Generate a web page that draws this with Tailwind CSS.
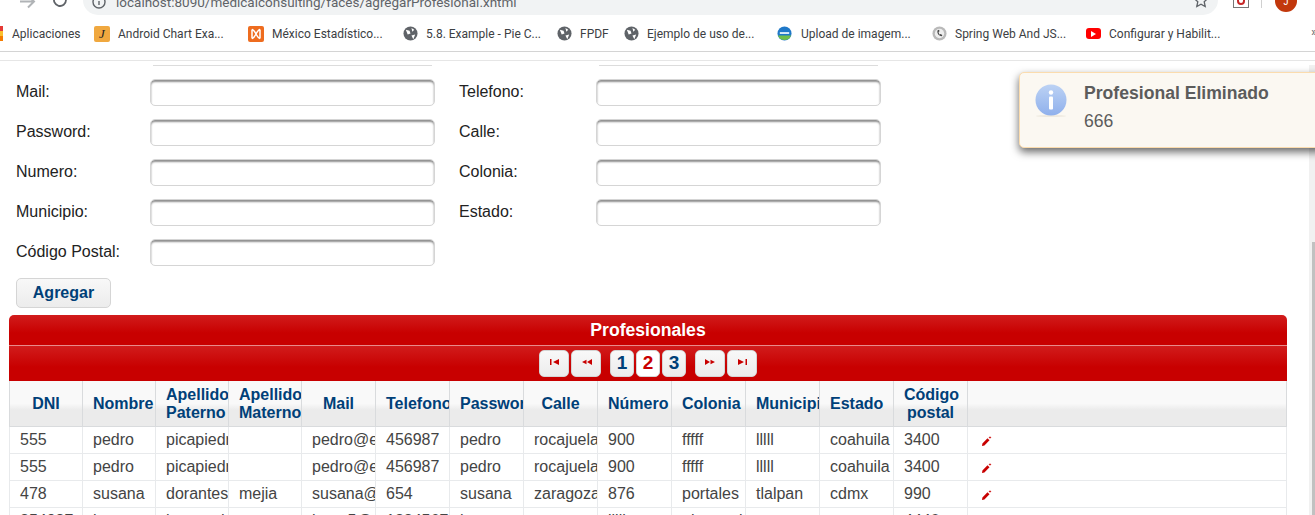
<!DOCTYPE html>
<html>
<head>
    <title>Agregar Profesional</title>
    <script src="https://cdn.jsdelivr.net/npm/@tailwindcss/browser@4"></script>
</head>
<body class="bg-white h-[515px] overflow-hidden relative font-['Liberation_Sans',Arial,sans-serif]">

    <!-- Browser toolbar, cropped at the top -->
    <div class="h-[15px] overflow-hidden flex items-end relative">
        <svg class="absolute left-[19px] bottom-[5px] w-[17px] h-[17px]" viewBox="0 0 17 17" fill="none" stroke="#b0b3b6" stroke-width="2"><path d="M1 8.500h14M9 2.500l6 6-6 6"/></svg>
        <svg class="absolute left-[52px] bottom-[7px] w-[16px] h-[16px]" viewBox="0 0 16 16" fill="none" stroke="#5f6368" stroke-width="1.8"><path d="M14 8a6 6 0 1 1-2-4.500"/></svg>
        <div class="ml-[83px] w-[1135px] h-[30px] bg-[#f1f3f4] rounded-b-[15px] flex items-end pb-[5px] shrink-0 relative">
            <svg class="ml-[9px] mb-[1px] w-[14px] h-[14px] shrink-0" viewBox="0 0 14 14" fill="none" stroke="#5f6368" stroke-width="1.400"><circle cx="7" cy="7" r="6"/><path d="M7 6v4"/></svg>
            <span class="ml-[10px] text-[13.5px] leading-[16px] text-[#5f6368] font-['Roboto',sans-serif] whitespace-nowrap">localhost:8090/medicalconsulting/faces/agregarProfesional.xhtml</span>
            <svg class="absolute right-[9px] bottom-[7px] w-[16px] h-[16px]" viewBox="0 0 16 16" fill="none" stroke="#5f6368" stroke-width="1.300"><path d="M8 1.500l2 4.500 4.800.5-3.600 3.200 1 4.800L8 12.200 3.800 14.500l1-4.800L1.200 6.500 6 6z"/></svg>
        </div>
        <div class="ml-[15px] w-[16px] h-[20px] border border-[#777] bg-white flex justify-center items-end pb-[2px] shrink-0 mb-[7px]">
            <div class="w-[8px] h-[10px] border-2 border-[#c62828] rounded-b-[4px]"></div>
        </div>
        <div class="ml-[12px] w-px h-[14px] bg-[#d0d0d0] mb-[7px] shrink-0"></div>
        <div class="ml-[13px] w-[22px] h-[22px] rounded-full bg-[#c2380c] text-white text-[10px] flex items-center justify-center shrink-0 mb-[3px]">J</div>
    </div>

    <!-- Bookmarks bar -->
    <div class="h-[37px] pt-[1px] border-b border-[#d4d4d4] flex items-center text-[12px] text-[#3c4043] font-['Roboto',sans-serif] whitespace-nowrap relative">
        <div class="absolute left-0 top-[11px] w-[3px] h-[15px] bg-[linear-gradient(#e53935_0_33%,#fbc02d_33%_66%,#f57c00_66%)]"></div>
        <span class="ml-[12px] w-[82px] shrink-0">Aplicaciones</span>
        <div class="w-[154px] flex items-center gap-[8px] shrink-0">
            <div class="w-[16px] h-[16px] rounded-[2px] bg-[#f0a83f] text-[#222] text-[13px] italic font-['Liberation_Serif',serif] flex items-center justify-center">J</div>
            <span>Android Chart Exa...</span>
        </div>
        <div class="w-[155px] flex items-center gap-[8px] shrink-0">
            <div class="w-[16px] h-[16px] rounded-[2px] bg-[#ee6c1f] flex items-center justify-center">
                <svg class="w-[12px] h-[12px]" viewBox="0 0 12 12" fill="none" stroke="#fff" stroke-width="1.500"><path d="M2 1.500c3 0 5 9 8 9M10 1.500c-3 0-5 9-8 9M2 1.500v9M10 1.500v9"/></svg>
            </div>
            <span>México Estadístico...</span>
        </div>
        <div class="w-[154px] flex items-center gap-[8px] shrink-0">
            <svg class="w-[15px] h-[15px]" viewBox="0 0 16 16"><circle cx="8" cy="8" r="7.500" fill="#5f6368"/><path d="M3 4l4 1 1 3-3 1zM9 2l3 2-2 2zM9 10l4-1-2 5z" fill="#fff"/></svg>
            <span>5.8. Example - Pie C...</span>
        </div>
        <div class="w-[67px] flex items-center gap-[8px] shrink-0">
            <svg class="w-[15px] h-[15px]" viewBox="0 0 16 16"><circle cx="8" cy="8" r="7.500" fill="#5f6368"/><path d="M3 4l4 1 1 3-3 1zM9 2l3 2-2 2zM9 10l4-1-2 5z" fill="#fff"/></svg>
            <span>FPDF</span>
        </div>
        <div class="w-[153px] flex items-center gap-[8px] shrink-0">
            <svg class="w-[15px] h-[15px]" viewBox="0 0 16 16"><circle cx="8" cy="8" r="7.500" fill="#5f6368"/><path d="M3 4l4 1 1 3-3 1zM9 2l3 2-2 2zM9 10l4-1-2 5z" fill="#fff"/></svg>
            <span>Ejemplo de uso de...</span>
        </div>
        <div class="w-[155px] flex items-center gap-[9px] shrink-0">
            <svg class="w-[15px] h-[15px]" viewBox="0 0 16 16"><circle cx="8" cy="8" r="7.500" fill="#1f78c8"/><path d="M1 10a7.500 7.500 0 0 0 14 0z" fill="#6fbf4a"/><rect x="3" y="6.500" width="10" height="2" fill="#dfeffa"/></svg>
            <span>Upload de imagem...</span>
        </div>
        <div class="w-[154px] flex items-center gap-[8px] shrink-0">
            <svg class="w-[15px] h-[15px]" viewBox="0 0 16 16"><circle cx="8" cy="8" r="7.500" fill="#b9b9b9"/><circle cx="8" cy="8" r="5" fill="#eee"/><path d="M6 4.500c-1 3 1 6 4.500 6.500l.5-1.500-2-1-.8.8C7.500 8 7 7 7 6.300l1-.6L7.500 4z" fill="#444"/></svg>
            <span>Spring Web And JS...</span>
        </div>
        <div class="flex items-center gap-[8px] shrink-0">
            <div class="w-[15px] h-[11px] rounded-[3px] bg-[#f00] flex items-center justify-center">
                <div class="w-0 h-0 border-y-[3px] border-y-transparent border-l-[5px] border-l-white"></div>
            </div>
            <span>Configurar y Habilit...</span>
        </div>
        <span class="absolute left-[1311px] top-[9px] text-[#5f6368] text-[13px] leading-[16px]">»</span>
    </div>

    <!-- Page viewport -->
    <div class="h-[8px] bg-white border-b border-[#e6e6e6] box-content"></div>
    <div class="relative h-[454px] overflow-hidden text-[16px] text-[#222]">
        <div class="absolute right-0 top-[4px] bottom-0 w-[6px] bg-[#f1f1f1]"></div>
        <div class="absolute right-0 top-[181px] bottom-0 w-[3px] bg-[#c1c1c1]"></div>

        <!-- Form -->
        <div class="pt-[12px]">
            <!-- Bottom edges of the row that is scrolled away -->
            <div class="h-0 relative">
                <div class="absolute left-[153px] -top-[8px] w-[279px] h-px bg-[#dcdcdc]"></div>
                <div class="absolute left-[599px] -top-[8px] w-[279px] h-px bg-[#dcdcdc]"></div>
            </div>
            <div class="h-[40px] pt-[6px] flex">
                <label class="ml-[16px] w-[134px] leading-[26px]">Mail:</label>
                <input type="text" class="w-[285px] h-[27px] border border-[#d5d5d5] rounded-[5px] bg-white shadow-[inset_0_2px_2px_#8f8f8f]">
                <label class="ml-[24px] w-[137px] leading-[26px]">Telefono:</label>
                <input type="text" class="w-[285px] h-[27px] border border-[#d5d5d5] rounded-[5px] bg-white shadow-[inset_0_2px_2px_#8f8f8f]">
            </div>
            <div class="h-[40px] pt-[6px] flex">
                <label class="ml-[16px] w-[134px] leading-[26px]">Password:</label>
                <input type="text" class="w-[285px] h-[27px] border border-[#d5d5d5] rounded-[5px] bg-white shadow-[inset_0_2px_2px_#8f8f8f]">
                <label class="ml-[24px] w-[137px] leading-[26px]">Calle:</label>
                <input type="text" class="w-[285px] h-[27px] border border-[#d5d5d5] rounded-[5px] bg-white shadow-[inset_0_2px_2px_#8f8f8f]">
            </div>
            <div class="h-[40px] pt-[6px] flex">
                <label class="ml-[16px] w-[134px] leading-[26px]">Numero:</label>
                <input type="text" class="w-[285px] h-[27px] border border-[#d5d5d5] rounded-[5px] bg-white shadow-[inset_0_2px_2px_#8f8f8f]">
                <label class="ml-[24px] w-[137px] leading-[26px]">Colonia:</label>
                <input type="text" class="w-[285px] h-[27px] border border-[#d5d5d5] rounded-[5px] bg-white shadow-[inset_0_2px_2px_#8f8f8f]">
            </div>
            <div class="h-[40px] pt-[6px] flex">
                <label class="ml-[16px] w-[134px] leading-[26px]">Municipio:</label>
                <input type="text" class="w-[285px] h-[27px] border border-[#d5d5d5] rounded-[5px] bg-white shadow-[inset_0_2px_2px_#8f8f8f]">
                <label class="ml-[24px] w-[137px] leading-[26px]">Estado:</label>
                <input type="text" class="w-[285px] h-[27px] border border-[#d5d5d5] rounded-[5px] bg-white shadow-[inset_0_2px_2px_#8f8f8f]">
            </div>
            <div class="h-[40px] pt-[6px] flex">
                <label class="ml-[16px] w-[134px] leading-[26px]">Código Postal:</label>
                <input type="text" class="w-[285px] h-[27px] border border-[#d5d5d5] rounded-[5px] bg-white shadow-[inset_0_2px_2px_#8f8f8f]">
            </div>
        </div>

        <button class="block mt-[5px] ml-[16px] w-[95px] h-[30px] border border-[#d5d5d5] rounded-[5px] bg-[linear-gradient(#f8f8f8,#ececec)] font-bold text-[#004078]">Agregar</button>

        <!-- Professionals table -->
        <div class="mt-[7px] ml-[9px] w-[1278px]">
            <div class="h-[31px] rounded-t-[5px] border-b border-[#e88b8b] bg-[linear-gradient(#d11c1c,#c80000_60%)] text-white font-bold text-[17.6px] leading-[30px] text-center">Profesionales</div>
            <div class="h-[35px] bg-[linear-gradient(#d11c1c,#c80000_60%)] flex items-start pt-[4px] pl-[530px] text-[#c80000]">
                <button class="w-[30px] h-[27px] mr-[2px] pb-[4px] rounded-[5px] border border-[#d5d5d5] bg-[linear-gradient(#f8f8f8,#ececec)] flex items-center justify-center">
                    <svg class="w-[9px] h-[6px]" viewBox="0 0 9 6" fill="currentColor"><path d="M0 0h1.500v6H0zM9 0v6L3 3z"/></svg>
                </button>
                <button class="w-[30px] h-[27px] pb-[4px] rounded-[5px] border border-[#d5d5d5] bg-[linear-gradient(#f8f8f8,#ececec)] flex items-center justify-center">
                    <svg class="w-[11px] h-[6px]" viewBox="0 0 11 6" fill="currentColor"><path d="M11 0v6L6 3zM5.500 .7v4.600L1 3z"/></svg>
                </button>
                <button class="ml-[9px] w-[24px] h-[27px] mr-[2px] pb-[3px] rounded-[5px] border border-[#d5d5d5] bg-[linear-gradient(#f8f8f8,#ececec)] font-bold text-[19px] leading-none text-[#004078]">1</button>
                <button class="w-[24px] h-[27px] mr-[2px] pb-[3px] rounded-[5px] border border-[#d5d5d5] bg-white font-bold text-[19px] leading-none text-[#c80000]">2</button>
                <button class="w-[24px] h-[27px] pb-[3px] rounded-[5px] border border-[#d5d5d5] bg-[linear-gradient(#f8f8f8,#ececec)] font-bold text-[19px] leading-none text-[#004078]">3</button>
                <button class="ml-[9px] w-[30px] h-[27px] mr-[2px] pb-[4px] rounded-[5px] border border-[#d5d5d5] bg-[linear-gradient(#f8f8f8,#ececec)] flex items-center justify-center">
                    <svg class="w-[11px] h-[6px]" viewBox="0 0 11 6" fill="currentColor"><path d="M0 0v6l5-3zM5.500 .7v4.600L10 3z"/></svg>
                </button>
                <button class="w-[30px] h-[27px] pb-[4px] rounded-[5px] border border-[#d5d5d5] bg-[linear-gradient(#f8f8f8,#ececec)] flex items-center justify-center">
                    <svg class="w-[9px] h-[6px]" viewBox="0 0 9 6" fill="currentColor"><path d="M0 0v6l6-3zM7.500 0H9v6H7.500z"/></svg>
                </button>
            </div>
            <table class="w-full table-fixed border-collapse text-[#444]">
                <colgroup>
                    <col class="w-[73px]"><col class="w-[73px]"><col class="w-[73px]"><col class="w-[73px]"><col class="w-[74px]"><col class="w-[74px]"><col class="w-[74px]"><col class="w-[74px]"><col class="w-[74px]"><col class="w-[74px]"><col class="w-[74px]"><col class="w-[74px]"><col class="w-[74px]"><col>
                </colgroup>
                <thead class="bg-[linear-gradient(#f9f9f9_50%,#ebebeb_65%)] text-[#004078] font-bold leading-[18px]">
                    <tr class="h-[45px]">
                        <th class="border border-[#d9dbdd] border-t-0 px-[10px] pt-[2px] overflow-hidden">DNI</th>
                        <th class="border border-[#d9dbdd] border-t-0 px-[10px] pt-[2px] overflow-hidden">Nombre</th>
                        <th class="border border-[#d9dbdd] border-t-0 px-[10px] pt-[2px] overflow-hidden">Apellido Paterno</th>
                        <th class="border border-[#d9dbdd] border-t-0 px-[10px] pt-[2px] overflow-hidden">Apellido Materno</th>
                        <th class="border border-[#d9dbdd] border-t-0 px-[10px] pt-[2px] overflow-hidden">Mail</th>
                        <th class="border border-[#d9dbdd] border-t-0 px-[10px] pt-[2px] overflow-hidden">Telefono</th>
                        <th class="border border-[#d9dbdd] border-t-0 px-[10px] pt-[2px] overflow-hidden">Password</th>
                        <th class="border border-[#d9dbdd] border-t-0 px-[10px] pt-[2px] overflow-hidden">Calle</th>
                        <th class="border border-[#d9dbdd] border-t-0 px-[10px] pt-[2px] overflow-hidden">Número</th>
                        <th class="border border-[#d9dbdd] border-t-0 px-[10px] pt-[2px] overflow-hidden">Colonia</th>
                        <th class="border border-[#d9dbdd] border-t-0 px-[10px] pt-[2px] overflow-hidden">Municipio</th>
                        <th class="border border-[#d9dbdd] border-t-0 px-[10px] pt-[2px] overflow-hidden">Estado</th>
                        <th class="border border-[#d9dbdd] border-t-0 px-[10px] pt-[2px] overflow-hidden">Código postal</th>
                        <th class="border border-[#d9dbdd] border-t-0"></th>
                    </tr>
                </thead>
                <tbody id="rows"></tbody>
            </table>
        </div>
    </div>

    <!-- Growl message -->
    <div class="absolute left-[1019px] top-[72px] w-[320px] h-[76px] rounded-[5px] border border-[#fbdcae] bg-[#fbf8f2] shadow-[0_4px_8px_rgba(0,0,0,0.6)] flex text-[#5c5c5c]">
        <svg class="ml-[15px] mt-[11px] w-[32px] h-[34px] shrink-0" viewBox="0 0 32 34">
            <defs><linearGradient id="infoGrad" x1="0" y1="0" x2="0" y2="1"><stop offset="0" stop-color="#bcd2f4"/><stop offset="1" stop-color="#8fb0ec"/></linearGradient></defs>
            <ellipse cx="16" cy="32" rx="15" ry="1" fill="#eee9df"/>
            <circle cx="16" cy="16" r="15.500" fill="url(#infoGrad)"/>
            <circle cx="16" cy="8.500" r="2.200" fill="#fff"/>
            <rect x="14" y="12.500" width="4" height="13" rx="1" fill="#fff"/>
        </svg>
        <div class="ml-[17px] mt-[9px]">
            <div class="font-bold text-[17.6px] leading-[22px]">Profesional Eliminado</div>
            <div class="mt-[6px] text-[17.6px] leading-[22px]">666</div>
        </div>
    </div>

    <script>
        // table rows, cells clip at the column border
        const pencil = '<svg class="block mt-[2px] w-[10px] h-[10px]" viewBox="0 0 10 10" fill="#c80000"><path d="M0 10l.4-2.600L5.500 2.300 7.500 4.300 2.400 9.500zM8 0l.4 1.100 1.100.4-1.100.4L8 3l-.4-1.100-1.100-.4 1.100-.4z"/></svg>';
        const data = [
            ['555','pedro','picapiedra','','pedro@email','456987','pedro','rocajuela','900','fffff','lllll','coahuila','3400',pencil],
            ['555','pedro','picapiedra','','pedro@email','456987','pedro','rocajuela','900','fffff','lllll','coahuila','3400',pencil],
            ['478','susana','dorantes','mejia','susana@email','654','susana','zaragoza','876','portales','tlalpan','cdmx','990',pencil],
            ['254987','hugo','hernandez','','hugo5@mail','1234567','hugo','','lllll','ahuacatl','','mx','4440',''],
        ];
        document.getElementById('rows').innerHTML = data.map(r =>
            '<tr class="h-[27px]">' + r.map((c, i) =>
                '<td class="border border-[#e8eaec] overflow-hidden whitespace-nowrap ' + (i === 13 ? 'pl-[14px]' : 'pl-[10px]') + '">' + c + '</td>'
            ).join('') + '</tr>'
        ).join('');
    </script>
</body>
</html>
